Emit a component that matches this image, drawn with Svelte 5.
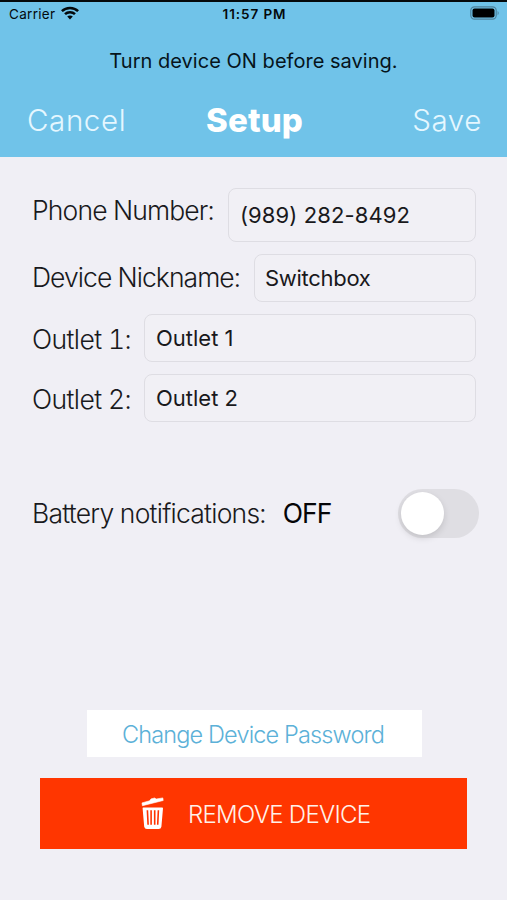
<script>
  const fields = [
    { id: 'phone', label: 'Phone Number:', value: '(989) 282-8492' },
    { id: 'nickname', label: 'Device Nickname:', value: 'Switchbox' },
    { id: 'outlet1', label: 'Outlet 1:', value: 'Outlet 1' },
    { id: 'outlet2', label: 'Outlet 2:', value: 'Outlet 2' },
  ];
</script>

<div class="screen">
  <header>
    <div class="status">
      <div class="carrier">
        <span>Carrier</span>
        <svg width="18" height="14" viewBox="0 0 18 14" fill="none" stroke="#04090c" stroke-width="2.5">
          <path d="M.9 5.2C5.2 .9 12.8 .9 17.1 5.2" />
          <path d="M4 8.2C6.7 5.5 11.3 5.5 14 8.2" />
          <path d="M9 13.5L6.2 10.6C7.8 9.2 10.2 9.2 11.8 10.6Z" fill="#04090c" stroke="none" />
        </svg>
      </div>
      <span class="time">11:57 PM</span>
      <svg class="battery" width="30" height="14" viewBox="0 0 30 14">
        <rect x=".8" y=".8" width="25.4" height="12.4" rx="3.6" fill="none" stroke="#4d829c" stroke-width="1.2" />
        <rect x="2.5" y="2.5" width="22" height="9" rx="2" fill="#000" />
        <path d="M27.6 4.7Q29.8 7 27.6 9.3Z" fill="#4d829c" />
      </svg>
    </div>
    <p class="message">Turn device ON before saving.</p>
    <nav>
      <span class="cancel">Cancel</span>
      <span class="title">Setup</span>
      <span class="save">Save</span>
    </nav>
  </header>

  <main>
    {#each fields as f}
      <div class="row {f.id}">
        <span class="label">{f.label}</span>
        <div class="field"><span>{f.value}</span></div>
      </div>
    {/each}
    <div class="notify">
      <span class="label">Battery notifications:</span>
      <span class="off">OFF</span>
      <div class="toggle"><div class="knob"></div></div>
    </div>
    <div class="password"><span>Change Device Password</span></div>
    <div class="remove">
      <svg width="24" height="34" viewBox="0 0 24 34">
        <path d="M1.4 8.7L1 5.9L8.6 3.8L10 1.9L13.6 1L15.2 2L21.8 .9L22.2 3.5Z" fill="#fff" stroke="#fff" stroke-width=".6" stroke-linejoin="round" />
        <path d="M2.4 11.3H21.2L19.6 29.6Q19.3 31.3 17.6 31.3H6Q4.3 31.3 4 29.6Z" fill="#fff" stroke="#fff" stroke-width="1.6" stroke-linejoin="round" />
        <path d="M6.4 13.3L7.1 27.8M10.1 13.3V27.8M13.7 13.3V27.8M17.4 13.3L16.7 27.8" stroke="#ff3300" stroke-width="1.6" fill="none" />
      </svg>
      <span>REMOVE DEVICE</span>
    </div>
  </main>
</div>

<style>
  :global(body) { margin: 0; }
  .screen {
    width: 507px;
    height: 900px;
    overflow: hidden;
    box-sizing: border-box;
    background: #f0eff5;
    font-family: Inter, "Liberation Sans", sans-serif;
    color: #19191c;
  }
  span, p { white-space: nowrap; }
  header {
    height: 157px;
    box-sizing: border-box;
    background: #70c3e9;
    border-top: 2px solid #05090b;
  }
  .status {
    display: grid;
    grid-template-columns: 1fr auto 1fr;
    align-items: center;
    height: 23px;
    padding: 0 7px 0 9px;
    color: #04090c;
  }
  .carrier { display: flex; align-items: center; gap: 6px; font-size: 13.5px; letter-spacing: .3px; }
  .carrier svg { margin-top: -2px; }
  .time { font-size: 13.5px; font-weight: 600; letter-spacing: .9px; }
  .battery { justify-self: end; margin-top: -1px; }
  .message {
    margin: 23px 0 0;
    height: 26px;
    line-height: 26px;
    text-align: center;
    font-size: 20px;
    letter-spacing: .03px;
    color: #06141b;
  }
  nav {
    display: grid;
    grid-template-columns: 1fr auto 1fr;
    align-items: center;
    height: 40px;
    margin-top: 26px;
    padding: 0 25px 0 27px;
    color: #e5f7ff;
    font-size: 29.5px;
    font-weight: 300;
    letter-spacing: .6px;
  }
  .title { font-size: 33px; font-weight: 800; color: #fff; letter-spacing: .2px; }
  .save { justify-self: end; }
  main { padding: 31px 31px 0 32px; }
  .row { display: flex; align-items: center; height: 48px; margin-bottom: 12px; }
  .label {
    flex: none;
    font-size: 26.5px;
    font-weight: 300;
    line-height: 32px;
    letter-spacing: -.6px;
    font-variant-numeric: tabular-nums;
  }
  .field {
    display: flex;
    align-items: center;
    box-sizing: border-box;
    height: 48px;
    margin-left: auto;
    padding-left: 10px;
    border: 1px solid #dedde3;
    border-radius: 8px;
    font-size: 22px;
    background: #f1f0f5;
  }
  .phone { height: 54px; }
  .phone .label { margin-top: -11px; letter-spacing: -.85px; }
  .phone .field { width: 248px; height: 54px; padding-left: 11px; letter-spacing: .1px; }
  .nickname .label { margin-top: -3px; letter-spacing: -.94px; }
  .nickname .field { width: 222px; letter-spacing: -.3px; }
  .outlet1 .label, .outlet2 .label { margin-top: 2px; }
  .outlet1 .field, .outlet2 .field { width: 332px; padding-left: 11px; }
  .notify { display: flex; align-items: center; height: 50px; margin: 66px -3px 0 0; }
  .notify .label { letter-spacing: -.76px; }
  .off { margin-left: 17px; font-size: 26.5px; letter-spacing: -1px; color: #050507; }
  .toggle {
    display: flex;
    align-items: center;
    box-sizing: border-box;
    width: 81px;
    height: 49px;
    padding-left: 3px;
    margin-left: auto;
    border-radius: 25px;
    background: #dfdee3;
  }
  .knob {
    width: 43px;
    height: 43px;
    border-radius: 50%;
    background: #fff;
    box-shadow: 0 3px 7px rgba(0, 0, 0, .13);
  }
  .password {
    display: flex;
    align-items: center;
    justify-content: center;
    box-sizing: border-box;
    width: 335px;
    height: 47px;
    margin: 172px 0 0 55px;
    padding: 2px 3px 0 0;
    background: #fff;
    color: #5cb1d8;
    font-size: 23.5px;
    font-weight: 300;
    letter-spacing: -.85px;
  }
  .remove {
    display: flex;
    align-items: center;
    box-sizing: border-box;
    width: 427px;
    height: 71px;
    margin: 21px 0 0 8px;
    padding-left: 101px;
    background: #ff3600;
    color: #fff1e9;
    font-size: 24px;
    font-weight: 300;
  }
  .remove span { margin: 2px 0 0 23px; letter-spacing: -.7px; }
</style>
